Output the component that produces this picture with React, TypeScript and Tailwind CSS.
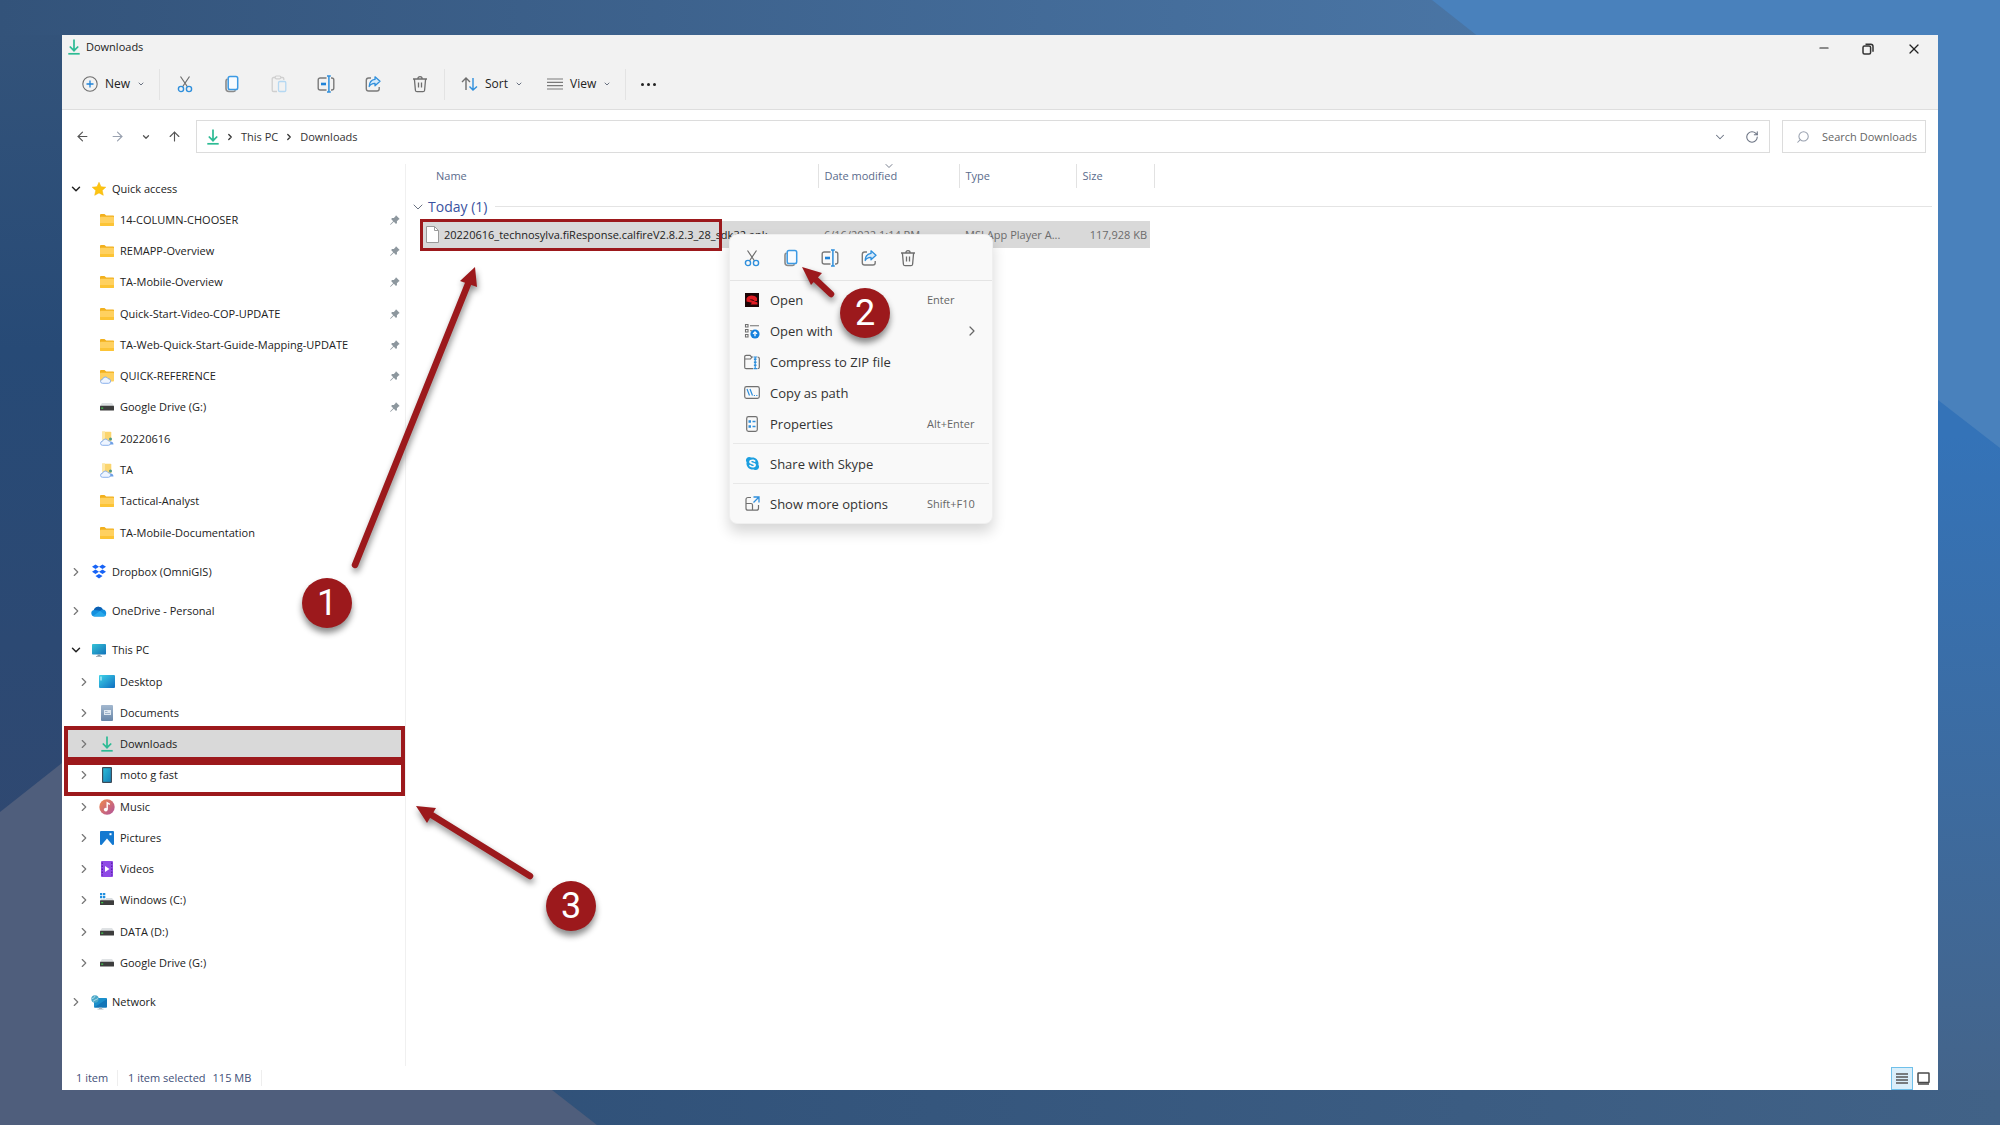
import type { ReactNode } from 'react';
import { ArrowLeft, ArrowRight, ArrowUp, ChevronDown, ChevronRight, Minus, RotateCw, Search, X } from 'lucide-react';
import { FaSkype } from 'react-icons/fa';

interface TreeItem {
  label: string;
  icon: ReactNode;
  level: 0 | 1;
  chevron?: 'open' | 'closed';
  pinned?: boolean;
  selected?: boolean;
  gap?: boolean;
}

interface MenuItem {
  label: string;
  icon: ReactNode;
  shortcut?: string;
  submenu?: boolean;
}

/* ---------- command icons ---------- */

const CutIcon = () => (
  <svg viewBox="0 0 16 18" className="h-[18px] w-4" fill="none">
    <path d="M3.5 1.5 10.6 12M12.5 1.5 5.4 12" stroke="#6e6e6e" strokeWidth="1.2" />
    <circle cx="4" cy="14" r="2.6" stroke="#2f8fdc" strokeWidth="1.4" />
    <circle cx="12" cy="14" r="2.6" stroke="#2f8fdc" strokeWidth="1.4" />
  </svg>
);

const CopyIcon = () => (
  <svg viewBox="0 0 16 18" className="h-[18px] w-4" fill="none">
    <path d="M3.5 4C2.4 4.4 2 5 2 6v7.5A3 3 0 0 0 5 16.5h4.5c1 0 1.7-.4 2-1.2" stroke="#8a8a8a" strokeWidth="1.6" />
    <rect x="4.2" y="1.5" width="9.5" height="13" rx="1.8" fill="#f7fbff" stroke="#3c9ae4" strokeWidth="1.5" />
  </svg>
);

const PasteIcon = () => (
  <svg viewBox="0 0 16 18" className="h-[18px] w-4" fill="none">
    <path d="M4 2.5H2.5c-.8 0-1.3.5-1.3 1.3v11.4c0 .8.5 1.3 1.3 1.3H6M10 2.5h1.5c.8 0 1.3.5 1.3 1.3V5" stroke="#cfcfcf" strokeWidth="1.3" />
    <rect x="4.2" y="1" width="5.6" height="2.8" rx="1.2" stroke="#cfcfcf" strokeWidth="1.2" />
    <rect x="7.5" y="6.5" width="7.3" height="10" rx="1.3" stroke="#b5d8f2" strokeWidth="1.3" />
  </svg>
);

const RenameIcon = () => (
  <svg viewBox="0 0 18 18" className="size-[18px]" fill="none">
    <path d="M9.5 3H3.2C2 3 1.2 3.8 1.2 5v8c0 1.2.8 2 2 2h6.3M14 3h.8c1.2 0 2 .8 2 2v8c0 1.2-.8 2-2 2H14" stroke="#7a7a7a" strokeWidth="1.4" />
    <path d="M10 1h3.8M10 17h3.8M11.9 1v16" stroke="#2f8fdc" strokeWidth="1.5" />
    <path d="M4 9h5" stroke="#1f83d8" strokeWidth="2.6" />
  </svg>
);

const ShareIcon = () => (
  <svg viewBox="0 0 16 18" className="h-[18px] w-4" fill="none">
    <path d="M6 3H3.6C2.2 3 1.3 3.9 1.3 5.3v8.4c0 1.4.9 2.3 2.3 2.3h8.3c1.4 0 2.3-.9 2.3-2.3V12" stroke="#7a7a7a" strokeWidth="1.4" />
    <path d="M10 1.8 15 6.3l-5 4.5V8.3C7.3 8.2 5.4 9.3 4.2 11.5 4.4 7.4 6.4 4.8 10 4.4Z" fill="#d5eafb" stroke="#2f8fdc" strokeWidth="1.3" strokeLinejoin="round" />
  </svg>
);

const DeleteIcon = () => (
  <svg viewBox="0 0 16 18" className="h-[18px] w-4" fill="none" stroke="#6e6e6e" strokeWidth="1.3">
    <path d="M1 4h14M5.8 4c0-3.3 4.4-3.3 4.4 0M2.4 4l1 11.2c.1.9.7 1.5 1.6 1.5h6c.9 0 1.5-.6 1.6-1.5L13.6 4M6.5 7.5v5M9.5 7.5v5" />
  </svg>
);

const NewIcon = () => (
  <svg viewBox="0 0 16 16" className="size-4" fill="none">
    <circle cx="8" cy="8" r="7.2" stroke="#6e6e6e" strokeWidth="1.1" />
    <path d="M8 4.5v7M4.5 8h7" stroke="#1f83d8" strokeWidth="1.3" />
  </svg>
);

const SortIcon = () => (
  <svg viewBox="0 0 17 16" className="h-4 w-[17px]" fill="none" strokeWidth="1.4">
    <path d="M5 14V2M1 6l4-4 4 4" stroke="#6e6e6e" />
    <path d="M12 2v12M8.5 10.5 12 14l4-3.5" stroke="#2f8fdc" />
  </svg>
);

const ViewIcon = () => (
  <svg viewBox="0 0 16 12" className="h-3 w-4" stroke="#7a7a7a" strokeWidth="1.2">
    <path d="M0 1h16M0 4.3h16M0 7.6h16M0 11h16" />
  </svg>
);

const DownloadsIcon = () => (
  <svg viewBox="0 0 12 16" className="h-4 w-3" fill="none" stroke="#2cbb94" strokeWidth="1.7">
    <path d="M6 .5v11M1.8 7.5 6 11.7l4.2-4.2" />
    <path d="M.3 14.8h11.4" />
  </svg>
);

const RestoreIcon = () => (
  <svg viewBox="0 0 12 12" className="size-3" fill="none" stroke="#333" strokeWidth="1.5">
    <rect x="1" y="3" width="7.6" height="8" rx="1.5" />
    <path d="M3.5 1.2h5.2c1.5 0 2.3.8 2.3 2.3v5.3" />
  </svg>
);

/* ---------- tree icons ---------- */

const FolderIcon = () => (
  <svg viewBox="0 0 14 12" className="h-3 w-[14px]">
    <path d="M0 1.2C0 .5.5 0 1.2 0h3.3l1.7 1.5H13c.6 0 1 .4 1 1V4H0Z" fill="#f2b01e" />
    <rect y="2.8" width="14" height="9.2" rx=".8" fill="#ffd160" />
    <path d="M0 9h14v2.2c0 .5-.3.8-.8.8H.8c-.5 0-.8-.3-.8-.8Z" fill="#fcc436" />
  </svg>
);

const Cloud = () => (
  <path
    d="M2.6 14.3a2 2 0 0 1-.1-4 3 3 0 0 1 5.6-.6 2.3 2.3 0 0 1 .4 4.600Z"
    fill="#eef5ff"
    stroke="#7fa9ea"
    strokeWidth=".9"
  />
);

const CloudFolderIcon = () => (
  <svg viewBox="0 0 14 15" className="h-[15px] w-[14px]">
    <path d="M0 2.2C0 1.5.5 1 1.2 1h3.3l1.7 1.5H13c.6 0 1 .4 1 1V5H0Z" fill="#f2b01e" />
    <rect y="3.8" width="14" height="8.8" rx=".8" fill="#ffd160" />
    <Cloud />
  </svg>
);

const SharedFolderIcon = () => (
  <svg viewBox="0 0 14 15" className="h-[15px] w-[14px]">
    <path d="M2.5.8h8c.5 0 .8.3.8.8V10H2.500Z" fill="#fbd56e" />
    <path d="M2 .3h3v8H2Z" fill="#fde7a6" />
    <circle cx="10.5" cy="8" r="1.5" fill="#4f9a86" />
    <path d="M8 13.5c0-4 5.500-4 5.500 0Z" fill="#6d9fe6" />
    <Cloud />
  </svg>
);

const DriveIcon = () => (
  <svg viewBox="0 0 14 8" className="h-2 w-[14px]">
    <path d="M2 0h10l2 3H0Z" fill="#dfe2e4" />
    <rect y="2.8" width="14" height="4.7" rx=".5" fill="#3d3d3d" />
    <rect x="1.2" y="4.5" width="2" height="1.3" fill="#3fc24c" />
  </svg>
);

const WindowsDriveIcon = () => (
  <svg viewBox="0 0 14 14" className="size-[14px]">
    <path d="M0 0h2.3v2.3H0ZM3 0h2.3v2.3H3ZM0 3h2.3v2.3H0ZM3 3h2.3v2.3H3Z" fill="#1f8fe0" />
    <path d="M6 5h6l2 2.5H0L1 6h5Z" fill="#d8dcdf" />
    <rect y="7.3" width="14" height="4.7" rx=".5" fill="#3d3d3d" />
    <rect x="1.2" y="9" width="2" height="1.3" fill="#3fc24c" />
  </svg>
);

const StarIcon = () => (
  <svg viewBox="0 0 14 14" className="size-[14px]">
    <path d="m7 .3 2 4.4 4.8.5-3.6 3.2 1.1 4.9L7 10.9l-4.300 2.400 1.100-4.900L.2 5.200 5 4.700Z" fill="#fdc412" stroke="#f5b400" strokeWidth=".5" strokeLinejoin="round" />
  </svg>
);

const DropboxIcon = () => (
  <svg viewBox="0 0 16 15" className="h-[15px] w-4" fill="#1763f6">
    <path d="m4.5.5 3.5 2.3-3.5 2.3L1 2.8ZM11.5.5 15 2.8l-3.5 2.3L8 2.8ZM4.5 5.5 8 7.8l-3.5 2.3L1 7.8ZM11.5 5.5 15 7.8l-3.5 2.3L8 7.8ZM8 9.9l3.5 2.200L8 14.400l-3.500-2.300Z" />
  </svg>
);

const OneDriveIcon = () => (
  <svg viewBox="0 0 16 11" className="h-[11px] w-4">
    <path d="M3.5 10.5A3.3 3.3 0 0 1 2.8 4 5 5 0 0 1 12 3.500a3.600 3.600 0 0 1 .7 7Z" fill="#1490df" />
    <path d="M2.8 4A5 5 0 0 1 12 3.5c-1.2 0-2 .4-2.8 1.2L5.500 4.300Z" fill="#0c5fb3" />
    <path d="m2 10 7-5 6 4.5c-.6.7-1.3 1-2.300 1H3.500Z" fill="#28a8ea" />
  </svg>
);

const PcIcon = () => (
  <svg viewBox="0 0 14 13" className="h-[13px] w-[14px]">
    <defs>
      <linearGradient id="pc" x1="0" y1="0" x2="1" y2="1">
        <stop stopColor="#35c3d6" />
        <stop offset="1" stopColor="#1272ba" />
      </linearGradient>
    </defs>
    <rect width="14" height="10.5" rx=".8" fill="url(#pc)" />
    <path d="M5.5 10.5h3V12h-3ZM4 12h6v.8H4Z" fill="#8b9aa6" />
  </svg>
);

const DesktopIcon = () => (
  <svg viewBox="0 0 16 13" className="h-[13px] w-4">
    <defs>
      <linearGradient id="desk" x1="0" y1="0" x2="1" y2="1">
        <stop stopColor="#3ed3e8" />
        <stop offset="1" stopColor="#0f6dc0" />
      </linearGradient>
    </defs>
    <rect width="16" height="13" rx="1" fill="url(#desk)" />
    <path d="M2 1.5v4" stroke="#d9fbff" />
  </svg>
);

const DocumentsIcon = () => (
  <svg viewBox="0 0 12 16" className="h-4 w-3">
    <defs>
      <linearGradient id="docs" x1="0" y1="0" x2="0" y2="1">
        <stop stopColor="#a3b8cf" />
        <stop offset="1" stopColor="#6886a8" />
      </linearGradient>
    </defs>
    <rect width="12" height="16" rx="1" fill="url(#docs)" />
    <rect x="3" y="5" width="7" height="5" fill="#dfe8f1" />
    <path d="M4 6.5h2.500M4 8.500h5" stroke="#8ea6c2" strokeWidth=".8" />
  </svg>
);

const PhoneIcon = () => (
  <svg viewBox="0 0 10 16" className="h-4 w-[10px]">
    <defs>
      <linearGradient id="phone" x1="0" y1="0" x2="1" y2="1">
        <stop stopColor="#2cbcd8" />
        <stop offset="1" stopColor="#1480b8" />
      </linearGradient>
    </defs>
    <rect width="10" height="16" rx="1" fill="#3c4b59" />
    <rect x="1.2" y="1.2" width="7.6" height="13.6" fill="url(#phone)" />
  </svg>
);

const MusicIcon = () => (
  <svg viewBox="0 0 16 16" className="size-4">
    <defs>
      <linearGradient id="music" x1="0" y1="0" x2="1" y2="1">
        <stop stopColor="#f08a4b" />
        <stop offset="1" stopColor="#b0529c" />
      </linearGradient>
    </defs>
    <circle cx="8" cy="8" r="7.7" fill="url(#music)" />
    <path d="M8.2 10.5V3.8l2.6 1.5" fill="none" stroke="#fff" strokeWidth="1.4" />
    <circle cx="6.8" cy="10.6" r="1.9" fill="#fff" />
  </svg>
);

const PicturesIcon = () => (
  <svg viewBox="0 0 14 14" className="size-[14px]">
    <rect width="14" height="14" rx="1" fill="#1479d0" />
    <path d="M1.5 14 7 7.5l5.5 6.500Z" fill="#fff" />
    <rect x="9.5" y="2.2" width="2" height="2" fill="#fff" />
  </svg>
);

const VideosIcon = () => (
  <svg viewBox="0 0 12 16" className="h-4 w-3">
    <rect width="12" height="16" rx="1" fill="#8f4ae6" />
    <path d="M1.3 1.5v13M10.7 1.5v13" stroke="#5b23a5" strokeWidth="1.3" strokeDasharray="1.5 1.5" />
    <path d="m4 5 4.5 3L4 11Z" fill="#fff" />
  </svg>
);

const NetworkIcon = () => (
  <svg viewBox="0 0 16 15" className="h-[15px] w-4">
    <rect x="3" y="3" width="13" height="9.5" rx=".8" fill="#1b8fcb" />
    <path d="M3 12.5 16 4v7.7c0 .5-.3.8-.8.800Z" fill="#1476b8" />
    <path d="M8 12.5h3v1.3H8ZM6.5 13.8h6v.8h-6Z" fill="#a9b5be" />
    <circle cx="4" cy="4" r="3.7" fill="#4aa7c7" />
    <path d="M1 3.5c2-.2 2.5-1 3-2.8M2 6.5c1-1.5 3-1.5 5-3" stroke="#c6e8f2" strokeWidth=".8" fill="none" />
  </svg>
);

const PinIcon = () => (
  <svg viewBox="0 0 10 10" className="size-[10px]" fill="#8d979e">
    <path d="m6 .3 3.7 3.6-1 .6-1.8 1.7.1 1.7-1 1L3.8 6.8.7 9.7H.2v-.5L3.2 6.2 1.1 4l1-1 1.8.1L5.5 1.3Z" />
  </svg>
);

const FileIcon = () => (
  <svg viewBox="0 0 13 17" className="h-[17px] w-[13px]">
    <path d="M.5.5h8l4 4v12H.5Z" fill="#fff" stroke="#9a9a9a" />
    <path d="M8.5.5v4h4" fill="none" stroke="#9a9a9a" />
  </svg>
);

/* ---------- context menu icons ---------- */

const PlayerIcon = () => (
  <svg viewBox="0 0 14 14" className="size-[14px]">
    <rect width="14" height="14" fill="#1c0506" />
    <path d="M1.5 5.500C3 2 9 1.500 12 5v3H9.500C9 6.500 6 6 4.500 6.800L9 8l3.500 1.500v2H5.500L7 9.800 1.500 8.500Z" fill="#e01b22" />
  </svg>
);

const OpenWithIcon = () => (
  <svg viewBox="0 0 16 16" className="size-4" fill="none">
    <path d="M1.5 1.5H4V4H1.5ZM1.5 6.5H4V9H1.5ZM1.5 11.5H4V14H1.5ZM6 2.7h9M6 7.7h2" stroke="#707070" strokeWidth="1.1" />
    <circle cx="11" cy="11" r="4.6" fill="#1580dd" />
    <path d="M11 13.3V9.5M9 10.900l2-2 2 2" stroke="#fff" strokeWidth="1.3" />
  </svg>
);

const ZipIcon = () => (
  <svg viewBox="0 0 16 16" className="size-4" fill="none">
    <path d="M9 3H7.5L6 1.3H2.2C1.3 1.3.7 2 .7 2.8v10.4c0 .9.6 1.5 1.5 1.5H9M13.5 3c1.2 0 1.8.6 1.8 1.5v8.7c0 .9-.6 1.5-1.8 1.5M.7 5h5.8L8 3" stroke="#707070" strokeWidth="1.2" />
    <path d="M9.5 3H13M9.5 14.7H13M11.2 3v12" stroke="#2f8fdc" strokeWidth="1.2" />
    <path d="M11.2 4.5v9" stroke="#2f8fdc" strokeWidth="2.6" strokeDasharray="1.5 1.5" />
  </svg>
);

const PathIcon = () => (
  <svg viewBox="0 0 16 13" className="h-[13px] w-4" fill="none">
    <rect x=".7" y=".7" width="14.6" height="11.6" rx="1.8" stroke="#707070" strokeWidth="1.2" />
    <path d="m3 3 2.5 6.5M6 3l2.5 6.5M9.8 9.5H11M12.200 9.500h1.200" stroke="#2f8fdc" strokeWidth="1.2" />
  </svg>
);

const PropertiesIcon = () => (
  <svg viewBox="0 0 12 16" className="h-4 w-3" fill="none">
    <rect x=".7" y=".7" width="10.6" height="14.6" rx="1.8" stroke="#707070" strokeWidth="1.2" />
    <path d="M2.5 5.5H5M2.5 10.5H5" stroke="#2f8fdc" strokeWidth="2.5" />
    <path d="M6.5 5.5h3M6.5 10.5h3" stroke="#2f8fdc" strokeWidth="1.3" />
  </svg>
);

const MoreIcon = () => (
  <svg viewBox="0 0 15 15" className="size-[15px]" fill="none">
    <path d="M6 1.5H3c-1.200 0-2 .8-2 2v8.700c0 1.200.8 2 2 2h8.500c1.200 0 2-.8 2-2V9M1 7.500h5c.9 0 1.500.6 1.500 1.500v5" stroke="#707070" strokeWidth="1.2" />
    <path d="M8.5 1H14v5.5M14 1 8.5 6.5" stroke="#2f8fdc" strokeWidth="1.3" />
  </svg>
);

const tree: TreeItem[] = [
  { label: 'Quick access', icon: <StarIcon />, level: 0, chevron: 'open' },
  { label: '14-COLUMN-CHOOSER', icon: <FolderIcon />, level: 1, pinned: true },
  { label: 'REMAPP-Overview', icon: <FolderIcon />, level: 1, pinned: true },
  { label: 'TA-Mobile-Overview', icon: <FolderIcon />, level: 1, pinned: true },
  { label: 'Quick-Start-Video-COP-UPDATE', icon: <FolderIcon />, level: 1, pinned: true },
  { label: 'TA-Web-Quick-Start-Guide-Mapping-UPDATE', icon: <FolderIcon />, level: 1, pinned: true },
  { label: 'QUICK-REFERENCE', icon: <CloudFolderIcon />, level: 1, pinned: true },
  { label: 'Google Drive (G:)', icon: <DriveIcon />, level: 1, pinned: true },
  { label: '20220616', icon: <SharedFolderIcon />, level: 1 },
  { label: 'TA', icon: <SharedFolderIcon />, level: 1 },
  { label: 'Tactical-Analyst', icon: <FolderIcon />, level: 1 },
  { label: 'TA-Mobile-Documentation', icon: <FolderIcon />, level: 1 },
  { label: 'Dropbox (OmniGIS)', icon: <DropboxIcon />, level: 0, chevron: 'closed', gap: true },
  { label: 'OneDrive - Personal', icon: <OneDriveIcon />, level: 0, chevron: 'closed', gap: true },
  { label: 'This PC', icon: <PcIcon />, level: 0, chevron: 'open', gap: true },
  { label: 'Desktop', icon: <DesktopIcon />, level: 1, chevron: 'closed' },
  { label: 'Documents', icon: <DocumentsIcon />, level: 1, chevron: 'closed' },
  { label: 'Downloads', icon: <DownloadsIcon />, level: 1, chevron: 'closed', selected: true },
  { label: 'moto g fast', icon: <PhoneIcon />, level: 1, chevron: 'closed' },
  { label: 'Music', icon: <MusicIcon />, level: 1, chevron: 'closed' },
  { label: 'Pictures', icon: <PicturesIcon />, level: 1, chevron: 'closed' },
  { label: 'Videos', icon: <VideosIcon />, level: 1, chevron: 'closed' },
  { label: 'Windows (C:)', icon: <WindowsDriveIcon />, level: 1, chevron: 'closed' },
  { label: 'DATA (D:)', icon: <DriveIcon />, level: 1, chevron: 'closed' },
  { label: 'Google Drive (G:)', icon: <DriveIcon />, level: 1, chevron: 'closed' },
  { label: 'Network', icon: <NetworkIcon />, level: 0, chevron: 'closed', gap: true },
];

const commands = [
  { label: 'Cut', icon: <CutIcon /> },
  { label: 'Copy', icon: <CopyIcon /> },
  { label: 'Paste', icon: <PasteIcon />, disabled: true },
  { label: 'Rename', icon: <RenameIcon /> },
  { label: 'Share', icon: <ShareIcon /> },
  { label: 'Delete', icon: <DeleteIcon /> },
];

const menuGroups: MenuItem[][] = [
  [
    { label: 'Open', icon: <PlayerIcon />, shortcut: 'Enter' },
    { label: 'Open with', icon: <OpenWithIcon />, submenu: true },
    { label: 'Compress to ZIP file', icon: <ZipIcon /> },
    { label: 'Copy as path', icon: <PathIcon /> },
    { label: 'Properties', icon: <PropertiesIcon />, shortcut: 'Alt+Enter' },
  ],
  [{ label: 'Share with Skype', icon: <FaSkype className="size-[15px] text-[#1c9fe0]" /> }],
  [{ label: 'Show more options', icon: <MoreIcon />, shortcut: 'Shift+F10' }],
];

const Divider = () => <div className="h-[31px] w-px bg-[#e3e3e3]" />;

const Backdrop = () => (
  <svg className="absolute inset-0 h-full w-full" viewBox="0 0 2000 1125" preserveAspectRatio="none" aria-hidden="true">
    <defs>
      <linearGradient id="bgTop" x1="0" y1="0" x2="1" y2="0">
        <stop stopColor="#33537a" />
        <stop offset="1" stopColor="#4d7aab" />
      </linearGradient>
      <linearGradient id="bgLeft" x1="0" y1="0" x2="0" y2="1">
        <stop stopColor="#33537a" />
        <stop offset=".35" stopColor="#274a76" />
        <stop offset="1" stopColor="#314870" />
      </linearGradient>
      <linearGradient id="bgRight" x1="0" y1="0" x2="0" y2="1">
        <stop offset=".38" stopColor="#3473b8" />
        <stop offset="1" stopColor="#44648a" />
      </linearGradient>
      <linearGradient id="bgBottom" x1="0" y1="0" x2="1" y2="0">
        <stop stopColor="#2f5078" />
        <stop offset="1" stopColor="#416287" />
      </linearGradient>
    </defs>
    <path d="M0 0h1700v560H0Z" fill="url(#bgTop)" />
    <path d="M0 35h1000v900H0Z" fill="url(#bgLeft)" />
    <path d="M1000 35h1000v1055H1000Z" fill="url(#bgRight)" />
    <path d="M400 1090h1600v35H400Z" fill="url(#bgBottom)" />
    <path d="M1432 0H2000v448L1938 400Z" fill="#4981bc" />
    <path d="M0 812 62 763 552 1090 597 1125H0Z" fill="#4f5e7c" />
  </svg>
);

const TitleBar = () => (
  <div className="flex h-6 items-center justify-between pl-1.5">
    <div className="flex items-center gap-1.5">
      <DownloadsIcon />
      <h1>Downloads</h1>
    </div>
    <div className="flex pt-1">
      <button aria-label="Minimize" className="flex w-11 justify-center"><Minus className="size-[14px]" /></button>
      <button aria-label="Restore" className="flex w-11 items-center justify-center"><RestoreIcon /></button>
      <button aria-label="Close" className="flex w-12 justify-center"><X className="size-4" strokeWidth={1.8} /></button>
    </div>
  </div>
);

const Toolbar = () => (
  <div className="flex h-[50px] items-center text-[12px]">
    <button className="flex w-[97px] items-center gap-[7px] pl-5">
      <NewIcon />
      <span>New</span>
      <ChevronDown className="size-2 text-gray-500" strokeWidth={3} />
    </button>
    <Divider />
    <div className="flex px-px">
      {commands.map((c) => (
        <button key={c.label} aria-label={c.label} disabled={c.disabled} className="flex w-[47px] justify-center">
          {c.icon}
        </button>
      ))}
    </div>
    <Divider />
    <button className="flex w-[86px] items-center gap-[7px] pl-4">
      <SortIcon />
      <span>Sort</span>
      <ChevronDown className="size-2 text-gray-500" strokeWidth={3} />
    </button>
    <button className="flex w-[94px] items-center gap-[7px] pl-4">
      <ViewIcon />
      <span>View</span>
      <ChevronDown className="size-2 text-gray-500" strokeWidth={3} />
    </button>
    <Divider />
    <button aria-label="See more" className="flex gap-[3px] px-[15px]">
      <span className="size-[3px] rounded-full bg-[#222]" />
      <span className="size-[3px] rounded-full bg-[#222]" />
      <span className="size-[3px] rounded-full bg-[#222]" />
    </button>
  </div>
);

const AddressRow = () => (
  <div className="flex gap-3 pt-2.5 pr-3 pb-[11px] text-[#333]">
    <div className="flex flex-1 items-center">
      <div className="flex w-[134px] items-center pl-[13px] text-[#555]">
        <button aria-label="Back" className="mr-5"><ArrowLeft className="size-[15px]" strokeWidth={1.8} /></button>
        <button aria-label="Forward" className="mr-4 text-gray-400"><ArrowRight className="size-[15px]" strokeWidth={1.8} /></button>
        <button aria-label="Recent locations" className="mr-4"><ChevronDown className="size-[10px]" strokeWidth={3} /></button>
        <button aria-label="Up"><ArrowUp className="size-[15px]" strokeWidth={1.8} /></button>
      </div>
      <nav aria-label="Address" className="flex h-[33px] flex-1 items-center border border-[#dcdcdc] pl-2.5">
        <DownloadsIcon />
        <ChevronRight className="mx-1.5 size-[10px]" strokeWidth={3} />
        <a href="#this-pc">This PC</a>
        <ChevronRight className="mx-1.5 size-[10px]" strokeWidth={3} />
        <a href="#downloads">Downloads</a>
        <button aria-label="Previous locations" className="mr-[18px] ml-auto text-gray-500"><ChevronDown className="size-[14px]" strokeWidth={1.8} /></button>
        <button aria-label="Refresh" className="mr-2.5 text-gray-500"><RotateCw className="size-[14px]" strokeWidth={1.8} /></button>
      </nav>
    </div>
    <label className="flex h-[33px] w-36 items-center gap-3 border border-[#dcdcdc] pl-[13px]">
      <Search className="size-[14px] shrink-0 -scale-x-100 text-gray-400" strokeWidth={1.8} />
      <input aria-label="Search Downloads" placeholder="Search Downloads" className="w-full min-w-0 outline-none placeholder:text-[#666]" />
    </label>
  </div>
);

const Sidebar = () => (
  <nav aria-label="Folders" className="flex w-[344px] flex-col border-r border-[#f0f0f0] pt-[9px] pb-12">
    <ul className="flex flex-1 flex-col pr-1 pl-[5px]">
      {tree.map((item, i) => (
        <li key={i} className={item.gap ? 'mt-2 flex flex-1' : 'flex flex-1'}>
          <a
            href="#folder"
            className={`flex flex-1 items-center whitespace-nowrap ${item.level ? 'pl-3' : 'pl-1'} ${item.selected ? 'bg-[#d9d9d9]' : ''}`}
          >
            <span className="flex w-[10px] justify-center">
              {item.chevron === 'open' && <ChevronDown className="size-[14px] shrink-0 text-[#222]" strokeWidth={2.5} />}
              {item.chevron === 'closed' && <ChevronRight className="size-[14px] shrink-0 text-[#777]" />}
            </span>
            <span className="mr-[5px] ml-[10px] flex w-4 justify-center">{item.icon}</span>
            <span>{item.label}</span>
            {item.pinned && <span className="mr-px ml-auto"><PinIcon /></span>}
          </a>
        </li>
      ))}
    </ul>
  </nav>
);

const FileList = () => (
  <main className="min-w-0 flex-1 pr-1.5">
    <table className="w-full table-fixed border-collapse text-left whitespace-nowrap">
      <colgroup>
        <col className="w-[14px]" />
        <col className="w-[398px]" />
        <col className="w-[141px]" />
        <col className="w-[117px]" />
        <col className="w-[78px]" />
        <col />
      </colgroup>
      <thead>
        <tr className="h-6 text-[#5a6b8c] [&>th]:p-0 [&>th]:font-normal">
          <th />
          <th className="border-r border-[#e2e2e2]"><span className="pl-4">Name</span></th>
          <th className="relative border-r border-[#e2e2e2]">
            <ChevronDown className="absolute -top-1 left-16 size-3 text-gray-500" strokeWidth={1.8} />
            <span className="pl-1.5">Date modified</span>
          </th>
          <th className="border-r border-[#e2e2e2]"><span className="pl-1.5">Type</span></th>
          <th className="border-r border-[#e2e2e2]"><span className="pl-1.5">Size</span></th>
          <th />
        </tr>
      </thead>
      <tbody>
        <tr className="h-[33px]">
          <td colSpan={6} className="p-0">
            <button className="flex w-full items-center pt-1 pl-1 text-[14px] leading-5 text-[#3a52a0]">
              <ChevronDown className="mr-0.5 size-4 text-gray-500" strokeWidth={1.5} />
              Today (1)
              <span className="ml-2 h-px flex-1 bg-[#e4e4e4]" />
            </button>
          </td>
        </tr>
        <tr className="h-[27px] text-[#6b6b6b] [&>td]:p-0">
          <td />
          <td>
            <div className="flex h-[27px] items-center gap-[5px] bg-[#d9d9d9] pl-1.5 text-[#222]">
              <FileIcon />
              20220616_technosylva.fiResponse.calfireV2.8.2.3_28_sdk32.apk
            </div>
          </td>
          <td><div className="flex h-[27px] items-center bg-[#d9d9d9] pl-1.5">6/16/2022 1:14 PM</div></td>
          <td><div className="flex h-[27px] items-center bg-[#d9d9d9] pl-1.5">MSI App Player A...</div></td>
          <td><div className="mr-1 flex h-[27px] items-center justify-end bg-[#d9d9d9] pr-[3px]">117,928 KB</div></td>
          <td />
        </tr>
      </tbody>
    </table>
  </main>
);

const ContextMenu = () => (
  <div role="menu" className="absolute top-[199px] left-[667px] w-[264px] rounded-lg border border-[#efefef] bg-[#f9f9f9] pb-1 text-[13px] text-[#333] shadow-[0_8px_14px_rgba(0,0,0,0.16)]">
    <div className="flex h-[46px] items-center border-b border-[#e4e4e4] pl-0.5">
      {commands.filter((c) => !c.disabled).map((c) => (
        <button key={c.label} aria-label={c.label} className="flex w-[39px] justify-center">{c.icon}</button>
      ))}
    </div>
    {menuGroups.map((group, i) => (
      <div key={i} className={i ? 'mx-[3px] mt-1 border-t border-[#e8e8e8] pt-1' : 'mx-[3px] pt-[3px]'}>
        {group.map((item) => (
          <button key={item.label} role="menuitem" className="flex h-[31px] w-full items-center text-left">
            <span className="ml-2.5 flex w-[18px] justify-center">{item.icon}</span>
            <span className="ml-[9px] w-[157px]">{item.label}</span>
            {item.shortcut && <span className="text-[11px] text-[#666]">{item.shortcut}</span>}
            {item.submenu && <ChevronRight className="ml-[37px] size-4 text-[#666]" strokeWidth={1.8} />}
          </button>
        ))}
      </div>
    ))}
  </div>
);

const StatusBar = () => (
  <footer className="flex h-6 items-center justify-between pr-2 pl-[14px] text-[#3f4f78]">
    <div className="flex items-center">
      <span className="w-[42px] border-r border-[#eee]">1 item</span>
      <span className="ml-[10px]">1 item selected</span>
      <span className="ml-[7px] border-r border-[#eee] pr-[10px]">115 MB</span>
    </div>
    <div className="flex items-center gap-1">
      <button aria-label="Details view" className="border border-[#6fc0ea] bg-[#d9eefa] px-1 py-[5px]">
        <svg viewBox="0 0 12 11" className="h-[11px] w-3" stroke="#555" strokeWidth="1.5">
          <path d="M0 1h12M0 4h12M0 7h12M0 10h12" />
        </svg>
      </button>
      <button aria-label="Large icons view">
        <svg viewBox="0 0 13 13" className="size-[13px]" fill="none" stroke="#4a4a4a" strokeWidth="1.5">
          <rect x="1" y="1" width="11" height="9.5" rx=".5" />
          <path d="M1 12h11" />
        </svg>
      </button>
    </div>
  </footer>
);

const badge = 'absolute flex size-[50px] items-center justify-center rounded-full bg-[#9c191c] font-[Roboto,sans-serif] text-[36px] leading-none text-white shadow-[0_5px_6px_rgba(0,0,0,0.45)]';

const Callouts = () => (
  <div className="pointer-events-none absolute inset-0">
    <div className="absolute top-[184px] left-[358px] h-8 w-[302px] border-[3px] border-[#9c191c]" />
    <div className="absolute top-[691px] left-0.5 h-[35px] w-[341px] border-4 border-[#9c191c]" />
    <div className="absolute top-[726px] left-0.5 h-[35px] w-[341px] border-4 border-[#9c191c]" />
    <svg viewBox="62 35 700 900" className="absolute top-0 left-0 h-[900px] w-[700px] overflow-visible drop-shadow-[1px_4px_3px_rgba(0,0,0,0.45)]" fill="#9c191c" stroke="#9c191c">
      <path d="M355 565 468 284M831 294 814 278M530 876 430 814" strokeWidth="6.5" strokeLinecap="round" />
      <path d="m475 267-15 14 17 6ZM802 267l20 6-11 12ZM416 806l20 2-9 15Z" stroke="none" />
    </svg>
    <div className={`${badge} top-[543px] left-[240px]`}>1</div>
    <div className={`${badge} top-[253px] left-[778px]`}>2</div>
    <div className={`${badge} top-[846px] left-[484px]`}>3</div>
  </div>
);

const App = () => (
  <div className="relative flex min-h-screen px-[62px] py-[35px] font-['Open_Sans','Noto_Sans',sans-serif] text-[11px] leading-4 text-[#222]">
    <Backdrop />
    <div className="relative flex min-w-0 flex-1 flex-col bg-white">
      <header className="border-b border-[#dedede] bg-[#f2f2f2]">
        <TitleBar />
        <Toolbar />
      </header>
      <AddressRow />
      <div className="flex flex-1">
        <Sidebar />
        <FileList />
      </div>
      <StatusBar />
      <ContextMenu />
      <Callouts />
    </div>
  </div>
);

export default App;
